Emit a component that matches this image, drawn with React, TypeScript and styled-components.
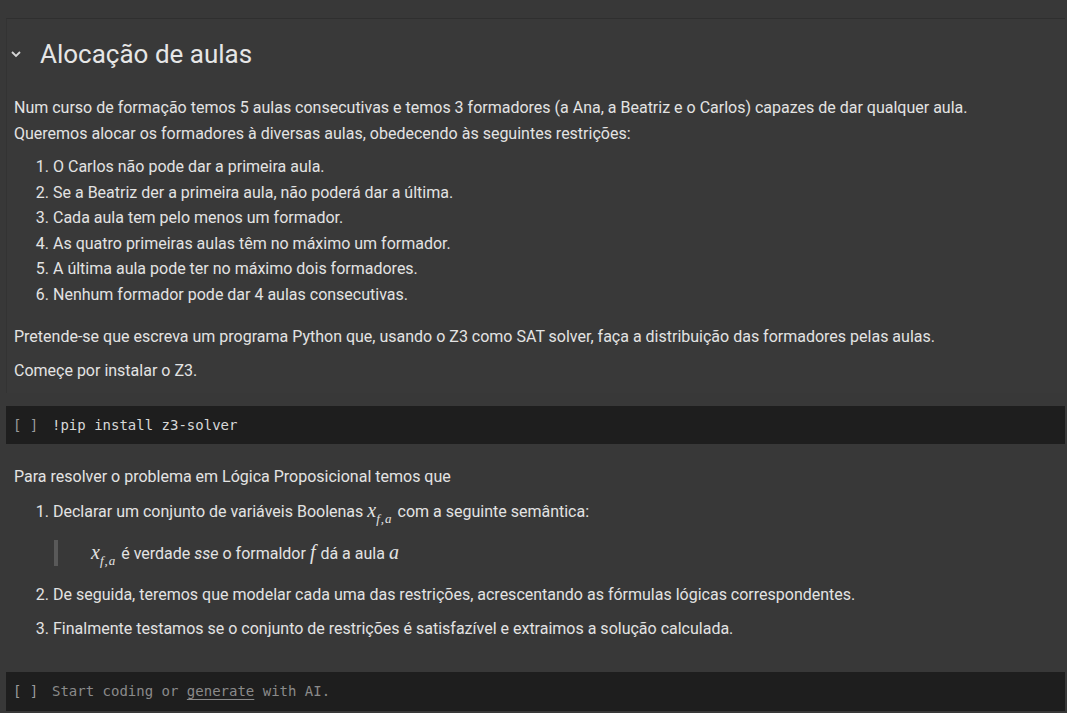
import * as React from "react";
import styled, { createGlobalStyle } from "styled-components";

const GlobalStyle = createGlobalStyle`
  html, body {
    margin: 0;
    padding: 0;
    background: #383838;
  }
  body {
    font-family: Roboto, "Liberation Sans", sans-serif;
    color: #e3e3e3;
  }
`;

const Notebook = styled.div`
  width: 1067px;
  height: 713px;
  overflow: hidden;
  padding-top: 18px;
  box-sizing: border-box;
`;

const TextCell = styled.div<{ $focused?: boolean }>`
  margin: 0 2px 0 6px;
  padding: 19px 0 10px 7px;
  border-top: 1px solid ${(p) => (p.$focused ? "#2f2f2f" : "transparent")};
  border-left: 1px solid ${(p) => (p.$focused ? "#333333" : "transparent")};
  background: ${(p) => (p.$focused ? "#393939" : "transparent")};
  font-size: 16px;
  line-height: 25.5px;
`;

const HeadingRow = styled.div`
  display: flex;
  align-items: center;
  height: 32px;
  margin-left: -7px;
  margin-bottom: 25px;
`;

const Chevron = styled.span`
  display: flex;
  width: 16px;
  justify-content: center;
  margin-left: 1px;
`;

const Heading = styled.h1`
  margin: 0 0 0 16px;
  font-size: 26px;
  font-weight: 400;
  color: #e6e6e6;
  line-height: 32px;
`;

const Para = styled.p<{ $gap?: number }>`
  margin: 0 0 ${(p) => p.$gap ?? 8}px 0;
`;

const List = styled.ol<{ $spread?: boolean }>`
  margin: 0 0 17px 0;
  padding-left: 39px;
  li {
    margin-bottom: ${(p) => (p.$spread ? "8.5px" : "0")};
  }
`;

const Quote = styled.blockquote`
  margin: 16px 0 16px 1px;
  padding-left: 33px;
  border-left: 4px solid #595959;
  line-height: 24px;
`;

const Math = styled.span`
  font-family: "Liberation Serif", "DejaVu Serif", serif;
  font-style: italic;
  font-size: 20px;
  padding-right: 1px;
  sub {
    font-size: 13px;
    vertical-align: -6px;
    line-height: 0;
    letter-spacing: 1px;
  }
`;

const CodeCell = styled.div<{ $top: number; $tall?: boolean }>`
  margin: ${(p) => p.$top}px 2px 0 6px;
  height: ${(p) => (p.$tall ? 39 : 38)}px;
  background: #1e1e1e;
  display: flex;
  align-items: center;
  padding-left: 7px;
  font-family: "DejaVu Sans Mono", "Liberation Mono", monospace;
  font-size: 14px;
`;

const RunMark = styled.span`
  color: #9a9a9a;
  width: 39px;
  flex: none;
`;

const Code = styled.span<{ $placeholder?: boolean }>`
  color: ${(p) => (p.$placeholder ? "#8a8a8a" : "#d8d8d8")};
  white-space: pre;
  u {
    text-underline-offset: 3px;
  }
`;

const ChevronIcon = () => (
  <svg width="12" height="12" viewBox="0 0 12 12">
    <path d="M2 4 L6 8 L10 4" fill="none" stroke="#d6d6d6" strokeWidth="1.8" />
  </svg>
);

const X = () => (
  <Math>
    x<sub>f,a</sub>
  </Math>
);

export default function App() {
  return (
    <>
      <GlobalStyle />
      <Notebook>
        <TextCell $focused>
          <HeadingRow>
            <Chevron>
              <ChevronIcon />
            </Chevron>
            <Heading>Alocação de aulas</Heading>
          </HeadingRow>
          <Para>
            Num curso de formação temos 5 aulas consecutivas e temos 3 formadores (a Ana, a Beatriz e o Carlos) capazes de dar qualquer aula.
            <br />
            Queremos alocar os formadores à diversas aulas, obedecendo às seguintes restrições:
          </Para>
          <List>
            <li>O Carlos não pode dar a primeira aula.</li>
            <li>Se a Beatriz der a primeira aula, não poderá dar a última.</li>
            <li>Cada aula tem pelo menos um formador.</li>
            <li>As quatro primeiras aulas têm no máximo um formador.</li>
            <li>A última aula pode ter no máximo dois formadores.</li>
            <li>Nenhum formador pode dar 4 aulas consecutivas.</li>
          </List>
          <Para>
            Pretende-se que escreva um programa Python que, usando o Z3 como SAT solver, faça a distribuição das formadores pelas aulas.
          </Para>
          <Para $gap={0}>Começe por instalar o Z3.</Para>
        </TextCell>

        <CodeCell $top={13}>
          <RunMark>[ ]</RunMark>
          <Code>!pip install z3-solver</Code>
        </CodeCell>

        <TextCell>
          <Para>Para resolver o problema em Lógica Proposicional temos que</Para>
          <List $spread>
            <li>
              Declarar um conjunto de variáveis Boolenas <X /> com a seguinte semântica:
              <Quote>
                <X /> é verdade <em>sse</em> o formaldor <Math>f</Math> dá a aula <Math>a</Math>
              </Quote>
            </li>
            <li>De seguida, teremos que modelar cada uma das restrições, acrescentando as fórmulas lógicas correspondentes.</li>
            <li>Finalmente testamos se o conjunto de restrições é satisfazível e extraimos a solução calculada.</li>
          </List>
        </TextCell>

        <CodeCell $top={3} $tall>
          <RunMark>[ ]</RunMark>
          <Code $placeholder>
            Start coding or <u>generate</u> with AI.
          </Code>
        </CodeCell>
      </Notebook>
    </>
  );
}
